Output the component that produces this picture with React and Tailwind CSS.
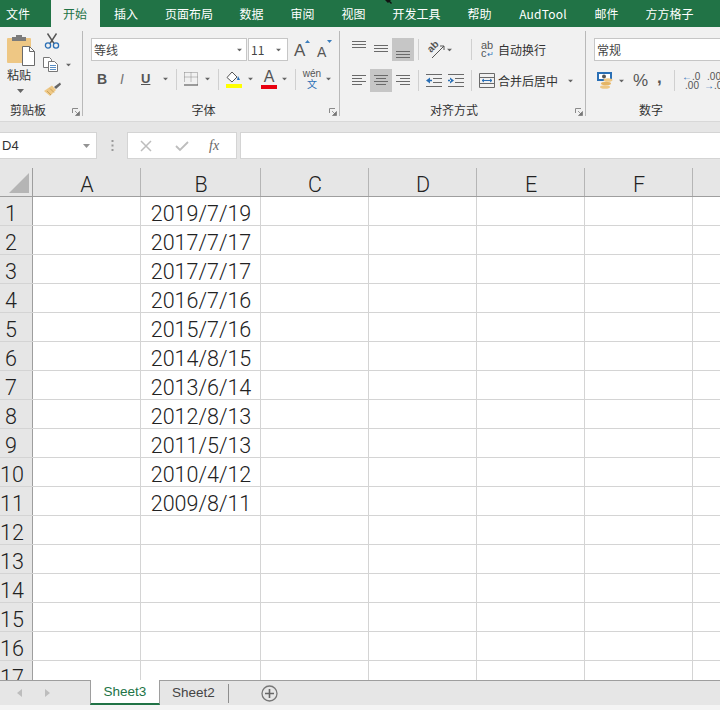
const cn = '"Noto Sans CJK SC", "Liberation Sans", sans-serif'

const tabs = [
    ['文件', 'w-[51px] pl-[6px]'],
    ['开始', 'w-[49px] justify-center pr-[1px] bg-[#f1f1f1] text-[#217346]'],
    ['插入', 'w-[52px] justify-center'],
    ['页面布局', 'w-[74px] justify-center'],
    ['数据', 'w-[51px] justify-center'],
    ['审阅', 'w-[51px] justify-center'],
    ['视图', 'w-[51px] justify-center'],
    ['开发工具', 'w-[75px] justify-center'],
    ['帮助', 'w-[51px] justify-center'],
    ['AudTool', 'w-[76px] justify-center tracking-[0.2px]'],
    ['邮件', 'w-[51px] justify-center'],
    ['方方格子', 'w-[75px] justify-center'],
]

const dates = ['2019/7/19', '2017/7/17', '2017/7/17', '2016/7/16', '2015/7/16', '2014/8/15', '2013/6/14', '2012/8/13', '2011/5/13', '2010/4/12', '2009/8/11']
const rows = Array.from({ length: 17 }, (_, i) => i + 1)
const cols = [
    ['A', 'w-[108px]'],
    ['B', 'w-[120px]'],
    ['C', 'w-[108px]'],
    ['D', 'w-[108px]'],
    ['E', 'w-[108px]'],
    ['F', 'w-[108px]'],
    ['', 'w-[28px]'],
]

const Arrow = ({ className = '' }) => (
    <svg width="7" height="4" viewBox="0 0 7 4" className={className}><path d="M0 0h7L3.5 4z" fill="#666" /></svg>
)
const Sep = ({ className = '' }) => <div className={`w-px h-[21px] bg-[#d0d0d0] ${className}`} />

const Lines = ({ w = 14, xs }) => (
    <svg width={w} height="11" viewBox={`0 0 ${w} 11`}>
        {xs.map(([x1, x2, y], i) => <path key={i} d={`M${x1} ${y + 0.5}H${x2}`} stroke="#6a6a6a" />)}
    </svg>
)

const Launcher = () => (
    <svg width="8" height="8" viewBox="0 0 8 8" className="absolute right-[3px] bottom-[5px]">
        <path d="M.5 5V.5H6" fill="none" stroke="#8a8a8a" />
        <path d="M3 3l3.5 3.5M7.5 3.5v4h-4z" fill="#777" stroke="#777" strokeWidth=".7" />
    </svg>
)

const Group = ({ label, width, launcher, children }) => (
    <div className={`relative flex flex-col shrink-0 h-[94px] ${width}`} >
        <div className="flex-1">{children}</div>
        {label}
        {launcher && <Launcher />}
        <div className="absolute right-0 top-[4px] bottom-[5px] w-px bg-[#b9b9b9]" />
    </div>
)

const GroupLabel = ({ children, className = '' }) => (
    <div className={`text-[12px] leading-[14px] text-[#333] text-center pb-[4px] ${className}`}>{children}</div>
)

const Clipboard = () => (
    <div className="flex h-[76px]">
        <div className="w-[43px] pl-[7px] pt-[8px] flex flex-col">
            <svg width="29" height="31" viewBox="0 0 29 31">
                <rect x="0" y="3" width="24" height="25" rx="1" fill="#eec784" />
                <rect x="5" y="2" width="14" height="4" fill="#7b7b7b" />
                <rect x="9" y="0" width="6" height="3" fill="#7b7b7b" />
                <path d="M15.500 11.500h7l5 5v14h-12z" fill="#fff" stroke="#6a6a6a" />
                <path d="M22.500 11.500v5h5" fill="none" stroke="#6a6a6a" />
            </svg>
            <div className="text-[12px] leading-[14px] mt-[2px] text-[#333]">粘贴</div>
            <Arrow className="ml-[10px] mt-[7px]" />
        </div>
        <div className="flex flex-col pt-[6px]">
            <svg width="16" height="16" viewBox="0 0 16 16" className="ml-[1px]">
                <path d="M3.500 0.500l6.500 10M12.500 0.500l-6.500 10" stroke="#555" strokeWidth="1.400" fill="none" />
                <circle cx="4" cy="12.500" r="2.600" fill="none" stroke="#2a6fb5" strokeWidth="1.300" />
                <circle cx="12" cy="12.500" r="2.600" fill="none" stroke="#2a6fb5" strokeWidth="1.300" />
            </svg>
            <div className="flex items-center mt-[8px]">
                <svg width="16" height="15" viewBox="0 0 16 15">
                    <path d="M.5.500h6l2 2v8h-8z" fill="#fff" stroke="#777" />
                    <path d="M5.500 4.500h6l3 3v7h-9z" fill="#fff" stroke="#777" />
                    <path d="M7 8.500h6M7 10.500h6M7 12.500h6" stroke="#5a8fc5" />
                </svg>
                <Arrow className="ml-[6px] scale-75" />
            </div>
            <svg width="17" height="15" viewBox="0 0 17 15" className="mt-[9px] ml-[1px]">
                <path d="M10 6L16 1.500 17 3.500 12 8z" fill="#666" />
                <path d="M0 10L8 4.500 12 9 6 15z" fill="#eec784" />
                <path d="M3 10l4 4M6 7.500l4 4" stroke="#c9a25c" />
            </svg>
        </div>
    </div>
)

const FontGroup = () => (
    <div>
        <div className="flex items-center pl-[8px] pt-[11px] h-[34px]">
            <div className="w-[156px] h-[23px] flex items-center justify-between bg-white border border-[#c6c6c6] px-[2px] text-[12px] text-[#444]">
                <span>等线</span><Arrow className="mr-[1px] scale-75" />
            </div>
            <div className="w-[40px] h-[23px] ml-[1px] flex items-center justify-between bg-white border border-[#c6c6c6] pl-[2px] pr-[5px] text-[12px] text-[#444]">
                <span>11</span><Arrow className="scale-75" />
            </div>
            <div className="ml-[6px] relative w-[14px] h-[20px] text-[17px] leading-[22px] text-[#555]" style={{ fontFamily: 'Liberation Sans' }}>A
                <svg width="5" height="3" className="absolute -right-[2px] top-0"><path d="M0 3L2.500 0 5 3z" fill="#3a7dbd" /></svg>
            </div>
            <div className="ml-[9px] relative w-[14px] h-[20px] text-[14px] leading-[24px] text-[#555]" style={{ fontFamily: 'Liberation Sans' }}>A
                <svg width="5" height="3" className="absolute -right-[1px] top-0"><path d="M0 0L2.500 3 5 0z" fill="#3a7dbd" /></svg>
            </div>
        </div>
        <div className="flex items-center h-[22px] mt-[7px] pl-[14px] text-[#555]" style={{ fontFamily: 'Liberation Sans' }}>
            <span className="w-[23px] font-bold text-[14px]">B</span>
            <span className="w-[21px] italic text-[14px] text-[#777]">I</span>
            <span className="w-[16px] text-[13px] font-bold underline">U</span>
            <Arrow className="ml-[5px] scale-75" />
            <Sep className="ml-[7px]" />
            <svg width="14" height="14" viewBox="0 0 14 14" className="ml-[7px]">
                <path d="M.5.500h13v13M.5.500v9M7 .5v9M.5 5h13" stroke="#888" strokeDasharray="1 1" fill="none" />
                <path d="M0 13h14" stroke="#444" />
            </svg>
            <Arrow className="ml-[6px] scale-75" />
            <Sep className="ml-[7px]" />
            <div className="ml-[7px] flex flex-col w-[16px]">
                <svg width="16" height="13" viewBox="0 0 16 13">
                    <path d="M6 1L1 6.500 6 11l5-5z" fill="#fff" stroke="#555" />
                    <path d="M12 5l2 4h-3z" fill="#2a6fb5" />
                </svg>
                <div className="h-[4px] bg-[#ffff00]" />
            </div>
            <Arrow className="ml-[5px] scale-75" />
            <div className="ml-[7px] flex flex-col items-center w-[16px]">
                <span className="text-[16px] leading-[14px] text-[#555]">A</span>
                <div className="h-[4px] w-[16px] mt-[1px] bg-[#e8000f]" />
            </div>
            <Arrow className="ml-[4px] scale-75" />
            <Sep className="ml-[7px]" />
            <div className="ml-[6px] w-[20px] flex flex-col items-center leading-none">
                <span className="text-[10px] leading-[10px] text-[#555]">wén</span>
                <span className="text-[10px] leading-[10px] text-[#2a6fb5]" style={{ fontFamily: cn }}>文</span>
            </div>
            <Arrow className="ml-[3px] scale-75" />
        </div>
    </div>
)

const AlignGroup = () => (
    <div className="pl-[12px]">
        <div className="flex items-center h-[23px] mt-[11px]">
            <div className="w-[22px] h-[23px] pt-[3px]"><Lines xs={[[0, 14, 0], [0, 14, 3], [0, 14, 6]]} /></div>
            <div className="w-[18px] h-[23px] pt-[7px]"><Lines xs={[[0, 14, 0], [0, 14, 3], [0, 14, 6]]} /></div>
            <div className="w-[22px] h-[23px] pt-[13px] bg-[#c6c6c6] flex justify-center"><Lines xs={[[0, 14, 0], [0, 14, 3], [0, 14, 6]]} /></div>
            <Sep className="ml-[4px]" />
            <svg width="18" height="20" viewBox="0 0 18 20" className="ml-[8px]">
                <path d="M5 18L17 6M17 6h-4M17 6v4" stroke="#555" fill="none" />
                <text x="0" y="0" fontSize="10" fontWeight="bold" fill="#555" transform="translate(4 13) rotate(-45)" style={{ fontFamily: 'Liberation Sans' }}>ab</text>
            </svg>
            <Arrow className="ml-[1px] scale-75" />
            <Sep className="ml-[18px]" />
            <div className="ml-[9px] w-[14px] text-[11px] leading-[8px] text-[#555]" style={{ fontFamily: 'Liberation Sans' }}>ab<br />c<span className="text-[8px] text-[#2a6fb5]">↵</span></div>
            <span className="ml-[3px] text-[12px] text-[#333]">自动换行</span>
        </div>
        <div className="flex items-center h-[23px] mt-[8px]">
            <div className="w-[18px]"><Lines xs={[[0, 14, 0], [0, 10, 3], [0, 14, 6], [0, 10, 9]]} /></div>
            <div className="w-[22px] h-[23px] bg-[#c6c6c6] flex items-center justify-center"><Lines xs={[[0, 14, 0], [2, 12, 3], [0, 14, 6], [2, 12, 9]]} /></div>
            <div className="w-[22px] flex justify-end pr-[4px]"><Lines xs={[[0, 14, 0], [4, 14, 3], [0, 14, 6], [4, 14, 9]]} /></div>
            <Sep className="ml-[4px]" />
            <svg width="16" height="13" viewBox="0 0 16 13" className="ml-[7px]">
                <path d="M0 .5h16M7 4.500h9M7 8.500h9M0 12.500h16" stroke="#6a6a6a" />
                <path d="M0 6.500L4 3.500v6zM3 5.700h3v1.600H3z" fill="#2a6fb5" />
            </svg>
            <svg width="16" height="13" viewBox="0 0 16 13" className="ml-[6px]">
                <path d="M0 .5h16M7 4.500h9M7 8.500h9M0 12.500h16" stroke="#6a6a6a" />
                <path d="M6 6.500L2 3.500v6zM0 5.700h3v1.600H0z" fill="#2a6fb5" />
            </svg>
            <Sep className="ml-[7px]" />
            <svg width="16" height="15" viewBox="0 0 16 15" className="ml-[7px]">
                <path d="M.5.500h15v14H.5zM.5 4.500h15M.5 10.500h15" fill="none" stroke="#6a6a6a" />
                <path d="M3 7.500h10M3 7.500l2-1.500M3 7.500l2 1.500M13 7.500l-2-1.500M13 7.500l-2 1.500" stroke="#2a6fb5" fill="none" />
            </svg>
            <span className="ml-[3px] text-[12px] text-[#333]">合并后居中</span>
            <Arrow className="ml-[9px] scale-75" />
        </div>
    </div>
)

const NumberGroup = () => (
    <div>
        <div className="ml-[8px] mt-[11px] h-[23px] w-[140px] flex items-center bg-white border border-[#c6c6c6] px-[2px] text-[12px] text-[#444]">常规</div>
        <div className="flex items-center h-[23px] mt-[8px] pl-[11px] text-[#555]" style={{ fontFamily: 'Liberation Sans' }}>
            <svg width="16" height="17" viewBox="0 0 16 17">
                <rect x="0" y="0" width="15" height="9" fill="#2a6fb5" />
                <rect x="2" y="2" width="11" height="5" fill="#fff" />
                <circle cx="7" cy="4.500" r="2" fill="#555" />
                <ellipse cx="11" cy="8" rx="4.500" ry="1.800" fill="#eec784" />
                <ellipse cx="9" cy="11.500" rx="5" ry="1.800" fill="#e5b565" />
                <ellipse cx="8" cy="15" rx="5" ry="1.800" fill="#eec784" />
            </svg>
            <Arrow className="ml-[5px] scale-75" />
            <span className="ml-[8px] text-[17px] w-[15px] leading-none">%</span>
            <span className="ml-[9px] -mt-[6px] text-[17px] font-bold w-[8px]">,</span>
            <Sep className="ml-[9px]" />
            <div className="ml-[7px] w-[17px] text-[10px] leading-[9px] text-right"><span className="text-[#2a6fb5]">←</span>.0<br />.00</div>
            <div className="ml-[5px] w-[17px] text-[10px] leading-[9px] text-right shrink-0">.00<br /><span className="text-[#2a6fb5]">→</span>.0</div>
        </div>
    </div>
)

const Cell = ({ width, children }) => (
    <div className={`shrink-0 h-full border-r border-[#d4d4d4] text-center pl-px ${width}`}>{children}</div>
)

export default function App() {
    return (
        <div className="relative w-[720px] h-[710px] overflow-hidden flex flex-col bg-white" style={{ fontFamily: cn }}>
            <div className="h-[27px] flex bg-[#217346] text-[12px] text-white shrink-0">
                {tabs.map(([t, c]) => <div key={t} className={`flex items-center shrink-0 ${c}`}>{t}</div>)}
            </div>
            <svg width="8" height="4" viewBox="0 0 8 4" className="absolute left-[385px] top-0">
                <path d="M0 0l3 3 1-1 2 2 1-1-2-2 1-1z" fill="#111" />
            </svg>

            <div className="h-[94px] flex bg-[#f1f1f1] shrink-0 overflow-hidden">
                <Group width="w-[83px]" launcher label={<GroupLabel className="text-left pl-[10px]">剪贴板</GroupLabel>}><Clipboard /></Group>
                <Group width="w-[257px]" launcher label={<GroupLabel className="pr-[16px]">字体</GroupLabel>}><FontGroup /></Group>
                <Group width="w-[246px]" launcher label={<GroupLabel className="pr-[18px]">对齐方式</GroupLabel>}><AlignGroup /></Group>
                <div className="flex flex-col flex-1 h-[94px]">
                    <div className="flex-1"><NumberGroup /></div>
                    <GroupLabel className="text-left pl-[53px]">数字</GroupLabel>
                </div>
            </div>

            <div className="h-[47px] bg-[#e6e6e6] border-t border-[#d8d8d8] flex shrink-0 pt-[10px]">
                <div className="w-[97px] h-[27px] bg-white border border-[#d4d4d4] border-l-0 flex items-center justify-between pl-[2px] pr-[6px] text-[13px] text-[#333]" style={{ fontFamily: 'Liberation Sans' }}>
                    D4<Arrow className="opacity-70" />
                </div>
                <div className="w-[30px] h-[27px] flex justify-center items-center">
                    <svg width="3" height="11" viewBox="0 0 3 11"><path d="M1.500 0v2M1.500 4.500v2M1.500 9v2" stroke="#999" strokeWidth="2" /></svg>
                </div>
                <div className="w-[110px] h-[27px] bg-white border border-[#d4d4d4] flex items-center">
                    <svg width="12" height="12" viewBox="0 0 12 12" className="ml-[12px]"><path d="M1 1l10 10M11 1L1 11" stroke="#bdbdbd" strokeWidth="1.500" /></svg>
                    <svg width="14" height="12" viewBox="0 0 14 12" className="ml-[23px]"><path d="M1 6l4 4 8-8" stroke="#bdbdbd" strokeWidth="1.800" fill="none" /></svg>
                    <span className="ml-[20px] text-[14px] italic text-[#666]" style={{ fontFamily: 'Liberation Serif' }}>fx</span>
                </div>
                <div className="flex-1 ml-[3px] h-[27px] bg-white border border-[#d4d4d4] border-r-0" />
            </div>

            <div className="flex-1 min-h-0 overflow-hidden" style={{ fontFamily: 'Roboto' }}>
                <div className="h-[29px] flex bg-[#e6e6e6] border-b border-[#9e9e9e] text-[21.500px] font-light text-[#222]">
                    <div className="w-[33px] shrink-0 h-full border-r border-[#9e9e9e] flex items-end justify-end pr-[3px] pb-[3px]">
                        <svg width="20" height="20" viewBox="0 0 20 20"><path d="M20 0v20H0z" fill="#b5b5b5" /></svg>
                    </div>
                    {cols.map(([c, w]) => (
                        <div key={w + c} className={`shrink-0 h-full border-r border-[#b5b5b5] text-center pl-px leading-[33px] ${w}`}>{c}</div>
                    ))}
                </div>
                {rows.map(r => (
                    <div key={r} className="h-[29px] flex border-b border-[#d4d4d4] text-[21.500px] font-light text-[#222]">
                        <div className="w-[33px] shrink-0 h-full bg-[#e6e6e6] border-r border-[#9e9e9e] leading-[33px]">
                            <div className="w-[22px] text-center">{r}</div>
                        </div>
                        {cols.map(([c, w]) => (
                            <Cell key={w + c} width={w}>
                                {c === 'B' && <span className="leading-[33px]">{dates[r - 1]}</span>}
                            </Cell>
                        ))}
                    </div>
                ))}
            </div>

            <div className="h-[25px] shrink-0 flex items-stretch bg-[#e6e6e6] border-t border-[#9e9e9e] text-[13.500px]" style={{ fontFamily: 'Liberation Sans' }}>
                <div className="w-[90px] flex items-center pl-[17px] gap-[23px]">
                    <svg width="5" height="8" viewBox="0 0 5 8"><path d="M5 0v8L0 4z" fill="#bdbdbd" /></svg>
                    <svg width="5" height="8" viewBox="0 0 5 8"><path d="M0 0v8l5-4z" fill="#bdbdbd" /></svg>
                </div>
                <div className="w-[70px] -mt-px pt-px bg-white border-x border-[#9e9e9e] border-b-2 border-b-[#217346] flex items-center justify-center text-[#217346]">Sheet3</div>
                <div className="w-[68px] flex items-center pl-[12px] text-[#444]">Sheet2</div>
                <div className="w-px h-[19px] my-auto bg-[#8e8e8e]" />
                <div className="ml-[32px] flex items-center">
                    <svg width="17" height="17" viewBox="0 0 17 17"><circle cx="8.500" cy="8.500" r="7.500" fill="none" stroke="#777" strokeWidth="1.300" /><path d="M8.500 4v9M4 8.500h9" stroke="#666" strokeWidth="1.600" /></svg>
                </div>
            </div>
            <div className="h-[5px] bg-[#f4f4f4] shrink-0" />
        </div>
    )
}
